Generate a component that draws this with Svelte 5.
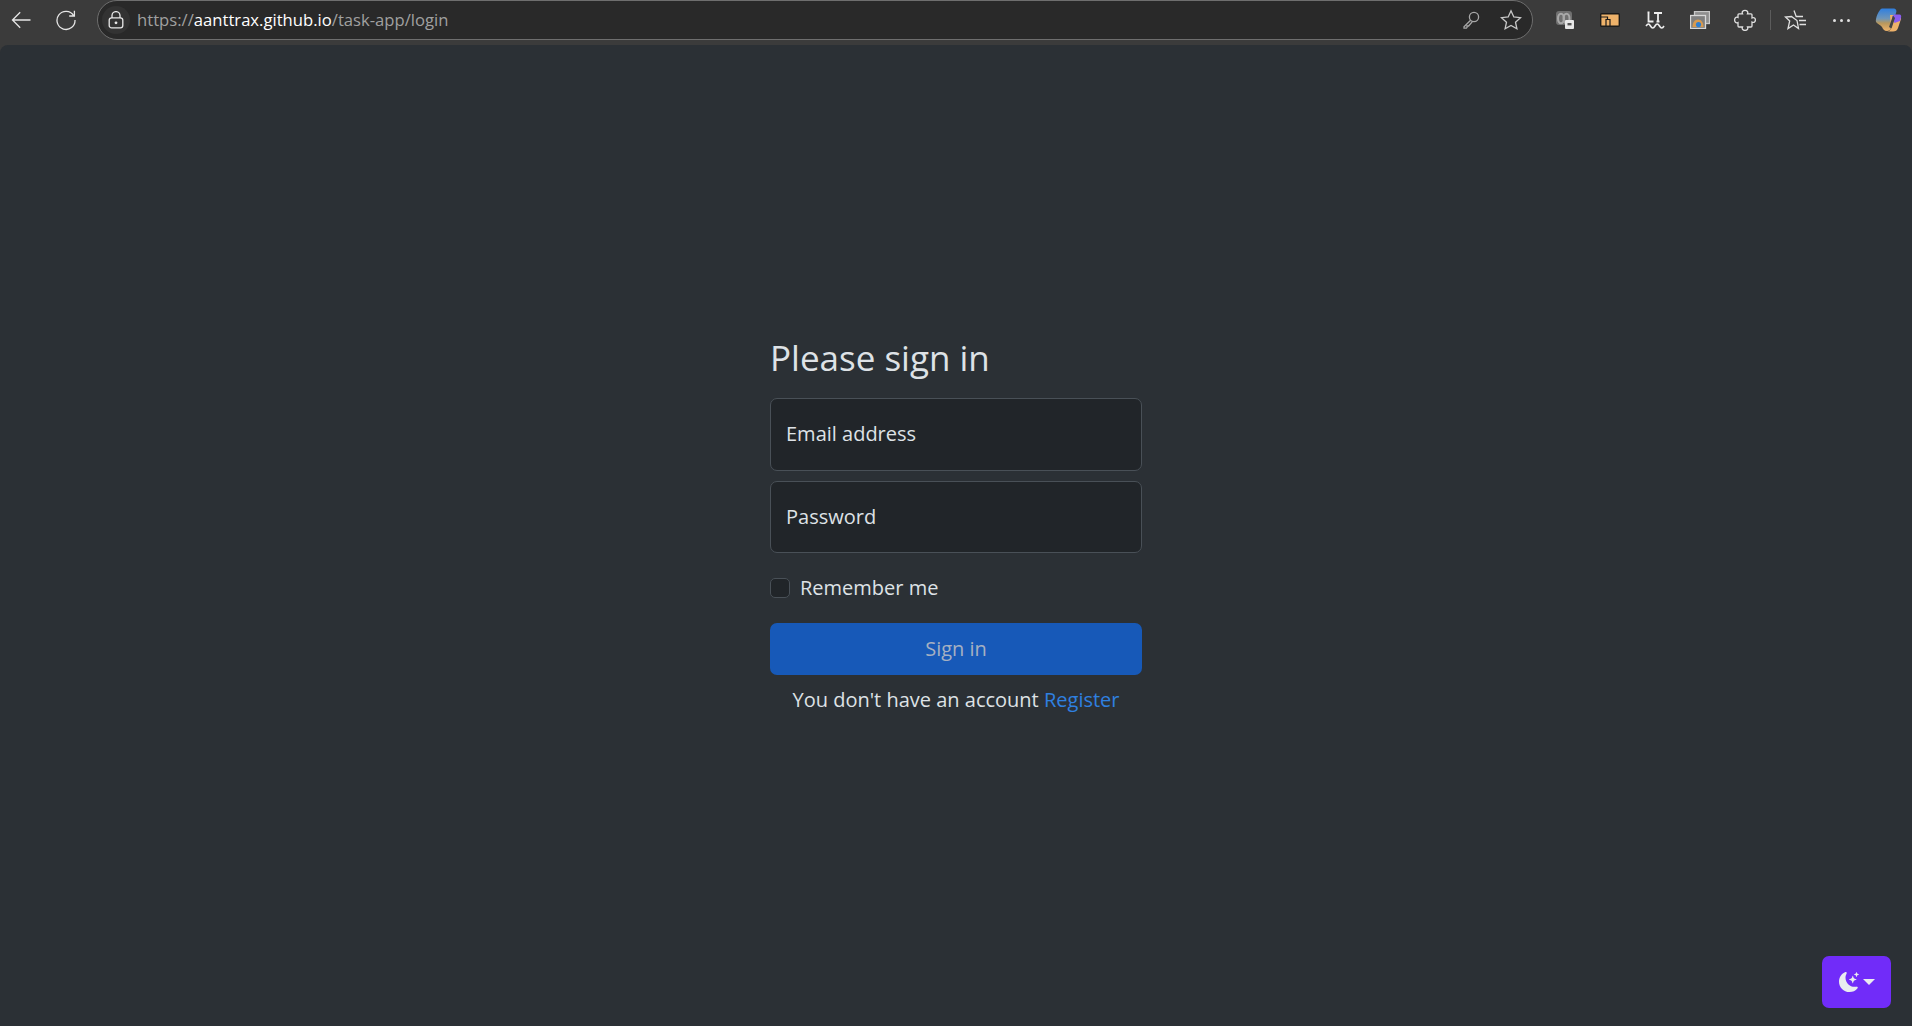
<script>
	let email = $state('');
	let password = $state('');
	let remember = $state(false);
</script>

<div class="window">
	<header class="toolbar">
		<button class="tool back" aria-label="Back">
			<svg width="20" height="20" viewBox="0 0 20 20"><path d="M19.500 10H1.500M9.200 2.300 1.500 10l7.700 7.700" /></svg>
		</button>
		<button class="tool reload" aria-label="Refresh">
			<svg width="22" height="22" viewBox="0 0 22 22"><path d="M18.600 6.600A9 9 0 1 0 20 11M19.400 1.800v5.200h-5.200" /></svg>
		</button>
		<div class="omnibox">
			<span class="lock">
				<svg width="16" height="18" viewBox="0 0 16 18"><path d="M4 7V4.600a4 4 0 0 1 8 0V7" /><rect x="1.200" y="6.800" width="13.600" height="10" rx="2.400" /><circle class="fill" cx="8" cy="11.800" r="1.400" /></svg>
			</span>
			<span class="url"><span class="dim">https://</span><span class="host">aanttrax.github.io</span><span class="dim">/task-app/login</span></span>
			<span class="key">
				<svg width="18" height="18" viewBox="0 0 18 18"><circle cx="12" cy="6" r="4.600" /><path d="M8.600 9.200 2 15.800v1.400h2.400l.6-.6v-1.600h1.600l3.600-4.200" /></svg>
			</span>
			<span class="star">
				<svg width="22" height="22" viewBox="0 0 22 22"><path d="m11 1.800 2.800 6.200 6.700.7-5 4.500 1.400 6.600L11 16.400l-5.900 3.400 1.400-6.600-5-4.500 6.700-.7z" /></svg>
			</span>
		</div>
		<div class="extensions">
			<span class="ext e1">
				<svg width="20" height="20" viewBox="0 0 20 20"><rect x="1" y="1" width="16" height="14" rx="3" fill="#6f6f6f" /><ellipse cx="6" cy="8.500" rx="3" ry="4.800" fill="none" stroke="#a8a8a8" stroke-width="2" /><ellipse cx="11.500" cy="8.500" rx="3" ry="4.800" fill="none" stroke="#a8a8a8" stroke-width="2" /><rect x="10" y="10" width="9" height="9" rx="1" fill="#e8e8e8" /><rect x="12.500" y="13" width="4" height="2.400" fill="#555" /></svg>
			</span>
			<span class="ext e2">
				<svg width="20" height="14" viewBox="0 0 20 14"><rect x=".7" y=".7" width="18.600" height="12.600" rx="1" fill="#eeb26a" stroke="#1b1b1b" stroke-width="1.400" /><path d="M1 4h6.500v2M6 13V6.500h4V13" fill="none" stroke="#1b1b1b" stroke-width="1.200" /></svg>
			</span>
			<span class="ext e3">
				<svg width="20" height="18" viewBox="0 0 20 18"><path d="M2.500 1.500h2M3.500 1.500v9h5M9 2h8M13 2v8.500M11.500 10.500h3" fill="none" stroke="#eee" stroke-width="1.800" /><path d="M1 15c2-2.600 3-2.600 4.500 0s3 2.600 4.500 0 3-2.600 4.500 0 3 2.600 4.500 0" fill="none" stroke="#eee" stroke-width="1.600" /></svg>
			</span>
			<span class="ext e4">
				<svg width="20" height="18" viewBox="0 0 20 18"><rect x="4.500" y=".5" width="15" height="12" fill="#8f8f8f" stroke="#c8c8c8" /><rect x=".5" y="4.500" width="15" height="13" fill="#7f7f7f" stroke="#d8d8d8" /><path d="M2.500 16c0-4.800 2.500-7.500 5.500-7.500s5.500 2.700 5.500 7.500z" fill="#d99a4e" /><circle cx="8.500" cy="13.500" r="2.600" fill="#2f7fd0" /></svg>
			</span>
			<span class="ext e5">
				<svg width="22" height="22" viewBox="0 0 22 22"><path d="M8.500 4.800C6.500.3 15.500.3 13.500 4.800H17a1 1 0 0 1 1 1V9C22.500 7 22.500 15 18 13v4a1 1 0 0 1-1 1h-3.500c2 4.500-7 4.500-5 0H5a1 1 0 0 1-1-1v-3.500c-4.500 2-4.500-7 0-5V5.800a1 1 0 0 1 1-1z" /></svg>
			</span>
			<span class="divider"></span>
			<span class="ext e6">
				<svg width="24" height="22" viewBox="0 0 24 22"><path d="M10 1.500 12.200 7.500H19M13 11.500l1.500 8-5-3.500L4 19.500 5.700 12 1.500 8l6-.5zM15 11.500h7M15.500 15.500H22" /></svg>
			</span>
			<span class="ext dots">
				<i></i><i></i><i></i>
			</span>
			<span class="ext copilot">
				<svg width="30" height="28" viewBox="0 0 30 28">
					<defs>
						<linearGradient id="cpl" x1="0" y1="0" x2="0" y2="1">
							<stop offset="0" stop-color="#2f7fe0" />
							<stop offset="0.45" stop-color="#6f96b8" />
							<stop offset="0.65" stop-color="#b8975c" />
							<stop offset="1" stop-color="#eeb26a" />
						</linearGradient>
					</defs>
					<path d="M8 2.500h11c3 0 4 2 3 4.500l-5 15c-.8 2.200-2 3-4 3-3 0-4-2-5-4-1-2-5-3-6-5C1 13 5 3 8 2.500z" fill="url(#cpl)" />
					<path d="M16 9h8c2 0 3.500 2 3 4l-3 9c-.7 2.500-2.500 3.500-5 3.500h-6c2 0 3-1 4-3z" fill="#eeb26a" />
					<path d="M20 8.500h5.500c1.500 0 2 1.500 1.500 3L26 15l-5.500 2L18 11z" fill="#8a5cf0" />
					<path d="M19 9.500 15 21l2.500 1.500L21 12z" fill="#444" />
				</svg>
			</span>
		</div>
	</header>

	<main class="page">
		<form class="signin" onsubmit={(e) => e.preventDefault()}>
			<h1>Please sign in</h1>
			<label class="floating">
				<input class="first" type="email" placeholder="Email address" bind:value={email} />
			</label>
			<label class="floating">
				<input type="password" placeholder="Password" bind:value={password} />
			</label>
			<label class="remember">
				<input type="checkbox" bind:checked={remember} />
				<span>Remember me</span>
			</label>
			<button class="submit" type="submit">Sign in</button>
			<p class="register">You don't have an account <a href="#register">Register</a></p>
		</form>

		<button class="theme" aria-label="Toggle theme">
			<svg width="20" height="20" viewBox="0 0 16 16"><path d="M6 .278a.768.768 0 0 1 .08.858 7.208 7.208 0 0 0-.878 3.46c0 4.021 3.278 7.277 7.318 7.277.527 0 1.04-.055 1.533-.16a.787.787 0 0 1 .81.316.733.733 0 0 1-.031.893A8.349 8.349 0 0 1 8.344 16C3.734 16 0 12.286 0 7.71 0 4.266 2.114 1.312 5.124.06A.752.752 0 0 1 6 .278z" /><path d="M10.794 3.148a.217.217 0 0 1 .412 0l.387 1.162c.173.518.579.924 1.097 1.097l1.162.387a.217.217 0 0 1 0 .412l-1.162.387a1.734 1.734 0 0 0-1.097 1.097l-.387 1.162a.217.217 0 0 1-.412 0l-.387-1.162A1.734 1.734 0 0 0 9.310 6.593l-1.162-.387a.217.217 0 0 1 0-.412l1.162-.387a1.734 1.734 0 0 0 1.097-1.097l.387-1.162zM13.863.099a.145.145 0 0 1 .274 0l.258.774c.115.346.386.617.732.732l.774.258a.145.145 0 0 1 0 .274l-.774.258a1.156 1.156 0 0 0-.732.732l-.258.774a.145.145 0 0 1-.274 0l-.258-.774a1.156 1.156 0 0 0-.732-.732l-.774-.258a.145.145 0 0 1 0-.274l.774-.258c.346-.115.617-.386.732-.732L13.863.1z" /></svg>
			<span class="caret"></span>
		</button>
	</main>
</div>

<style>
	:global(body) {
		background: #3b3b3b;
	}
	.window {
		display: flex;
		flex-direction: column;
		height: 1026px;
		overflow: hidden;
		font-family: 'Open Sans', 'Noto Sans', sans-serif;
	}
	.toolbar {
		display: flex;
		align-items: center;
		height: 45px;
		padding-bottom: 5px;
		box-sizing: border-box;
		background: #3b3b3b;
		flex: none;
	}
	.toolbar svg {
		display: block;
		fill: none;
		stroke-width: 1.3;
	}
	.tool {
		display: flex;
		align-items: center;
		justify-content: center;
		padding: 0;
		border: 0;
		background: none;
		width: 24px;
		height: 24px;
		stroke: #e6e6e6;
	}
	.back {
		margin-left: 9px;
	}
	.reload {
		margin-left: 21px;
	}
	.omnibox {
		display: flex;
		align-items: center;
		flex: none;
		box-sizing: border-box;
		width: 1436px;
		height: 40px;
		margin-left: 19px;
		padding: 0 10px 0 4px;
		background: #292929;
		border: 1px solid #6e6e6e;
		border-radius: 20px;
	}
	.lock {
		display: flex;
		align-items: center;
		justify-content: center;
		width: 28px;
		height: 28px;
		border-radius: 50%;
		background: #333;
		stroke: #e8e8e8;
	}
	.fill {
		fill: #e8e8e8;
		stroke: none;
	}
	.url {
		margin: 0 0 2px 7px;
		font-size: 16.65px;
		white-space: nowrap;
	}
	.dim {
		color: #a0a0a0;
	}
	.host {
		color: #fff;
	}
	.key {
		margin-left: auto;
		stroke: #a8a8a8;
	}
	.star {
		margin-left: 20px;
		stroke: #c8c8c8;
	}
	.extensions {
		display: flex;
		align-items: center;
		flex: 1;
		height: 100%;
	}
	.ext {
		display: flex;
		align-items: center;
		justify-content: center;
		width: 24px;
		height: 24px;
	}
	.e1 {
		margin-left: 20px;
	}
	.e2,
	.e3,
	.e4,
	.e5 {
		margin-left: 21px;
	}
	.e5 {
		stroke: #e0e0e0;
	}
	.divider {
		width: 1px;
		height: 20px;
		margin-left: 13px;
		background: #5c5c5c;
	}
	.e6 {
		margin-left: 13px;
		stroke: #e0e0e0;
	}
	.dots {
		margin-left: 21px;
		gap: 4px;
	}
	.dots i {
		width: 3px;
		height: 3px;
		border-radius: 50%;
		background: #e0e0e0;
	}
	.copilot {
		margin-left: 21px;
		width: 30px;
	}
	.page {
		position: relative;
		flex: 1;
		box-sizing: border-box;
		padding-top: 292px;
		background: #2b3035;
		border-radius: 8px 8px 0 0;
		color: #dee2e6;
	}
	.signin {
		display: flex;
		flex-direction: column;
		width: 372px;
		margin: 0 auto;
		font-size: 20px;
		line-height: 1.5;
	}
	h1 {
		margin: 0 0 19px;
		font-size: 35px;
		font-weight: 400;
		line-height: 1.2;
	}
	.floating {
		display: block;
		margin-bottom: 10px;
	}
	.floating input {
		display: block;
		box-sizing: border-box;
		width: 100%;
		height: 72px;
		padding: 0 15px 2px;
		font: inherit;
		color: #dee2e6;
		background: #212529;
		border: 1px solid #495057;
		border-radius: 7px;
		outline: none;
	}
	.floating input.first {
		height: 73px;
	}
	.floating input::placeholder {
		color: #dee2e6;
		opacity: 1;
	}
	.remember {
		display: flex;
		align-items: center;
		gap: 10px;
		margin: 10px 0 20px;
	}
	.remember input {
		appearance: none;
		box-sizing: border-box;
		width: 20px;
		height: 20px;
		margin: 0;
		background: #212529;
		border: 1px solid #495057;
		border-radius: 5px;
	}
	.submit {
		height: 52px;
		padding: 0;
		font: inherit;
		color: #a5b0c2;
		background: #1759b8;
		border: 0;
		border-radius: 7px;
	}
	.register {
		margin: 10px 0 0;
		text-align: center;
	}
	.register a {
		color: #2f80e0;
		text-decoration: none;
	}
	.theme {
		position: absolute;
		right: 21px;
		bottom: 18px;
		display: flex;
		align-items: center;
		justify-content: center;
		gap: 4px;
		width: 69px;
		height: 52px;
		padding: 0;
		border: 0;
		border-radius: 7px;
		background: #712cf9;
	}
	.theme svg {
		display: block;
		fill: #e9ecef;
	}
	.caret {
		width: 0;
		height: 0;
		border-left: 6px solid transparent;
		border-right: 6px solid transparent;
		border-top: 6px solid #e9ecef;
	}
</style>
